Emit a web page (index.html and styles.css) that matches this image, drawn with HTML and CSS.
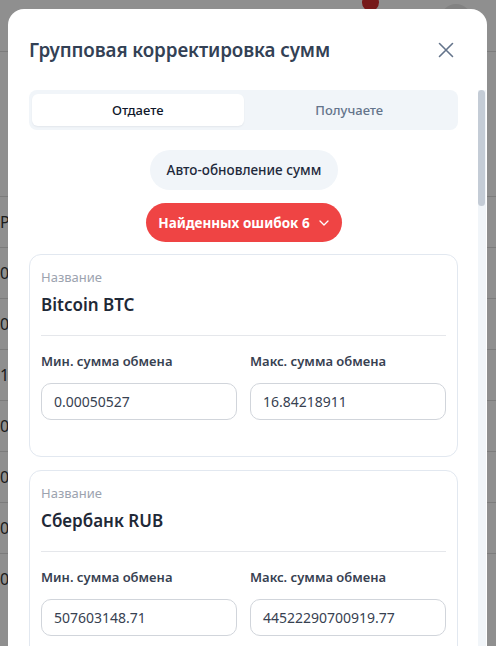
FILE: index.html
```html
<!DOCTYPE html>
<html lang="ru">
<head>
<meta charset="utf-8">
<title>Групповая корректировка сумм</title>
<link rel="stylesheet" href="styles.css">
</head>
<body>
<div class="page">
  <div class="topbar">
    <span class="badge"></span>
    <span class="avatar"></span>
  </div>
  <div class="rows">
    <div class="row">Р</div>
    <div class="row">0</div>
    <div class="row">0</div>
    <div class="row">1</div>
    <div class="row">0</div>
    <div class="row">0</div>
    <div class="row">0</div>
    <div class="row">0</div>
  </div>
  <div class="overlay"></div>
</div>

<div class="modal">
  <div class="modal-header">
    <h2 class="modal-title">Групповая корректировка сумм</h2>
    <button class="close" aria-label="Закрыть">
      <svg width="16" height="16" viewBox="0 0 16 16"><path d="M1.5 1.5 L14.5 14.5 M14.5 1.5 L1.5 14.5" stroke="#64748b" stroke-width="1.6" stroke-linecap="round" fill="none"/></svg>
    </button>
  </div>
  <div class="modal-body">
    <div class="tabs">
      <div class="tab active">Отдаете</div>
      <div class="tab">Получаете</div>
    </div>
    <div class="actions">
      <button class="btn-soft">Авто-обновление сумм</button>
      <button class="btn-danger">Найденных ошибок 6
        <svg width="10" height="6" viewBox="0 0 10 6"><path d="M1 1 L5 5 L9 1" stroke="#fff" stroke-width="1.3" fill="none" stroke-linecap="round" stroke-linejoin="round"/></svg>
      </button>
    </div>

    <div class="card">
      <div class="field-caption">Название</div>
      <div class="field-name">Bitcoin BTC</div>
      <div class="divider"></div>
      <div class="grid">
        <div class="col">
          <label class="lbl">Мин. сумма обмена</label>
          <div class="input">0.00050527</div>
        </div>
        <div class="col">
          <label class="lbl">Макс. сумма обмена</label>
          <div class="input">16.84218911</div>
        </div>
      </div>
    </div>

    <div class="card">
      <div class="field-caption">Название</div>
      <div class="field-name">Сбербанк RUB</div>
      <div class="divider"></div>
      <div class="grid">
        <div class="col">
          <label class="lbl">Мин. сумма обмена</label>
          <div class="input">507603148.71</div>
        </div>
        <div class="col">
          <label class="lbl">Макс. сумма обмена</label>
          <div class="input">44522290700919.77</div>
        </div>
      </div>
    </div>
  </div>
  <div class="scrollbar"><div class="thumb"></div></div>
</div>
</body>
</html>
```

FILE: styles.css
```css
* { box-sizing: border-box; }
html, body { margin: 0; padding: 0; }
body {
  width: 496px;
  height: 646px;
  overflow: hidden;
  font-family: "Noto Sans", "Open Sans", sans-serif;
  background: #fff;
  position: relative;
}
.page {
  position: absolute;
  inset: 0;
  background: #fff;
}
.topbar {
  height: 52px;
  border-bottom: 1px solid #ddd;
  position: relative;
}
.badge {
  position: absolute;
  left: 362px;
  top: -6px;
  width: 17px;
  height: 17px;
  border-radius: 50%;
  background: #d32f2f;
}
.avatar {
  position: absolute;
  left: 440px;
  top: 4px;
  width: 32px;
  height: 32px;
  border-radius: 50%;
  background: #e8e8e8;
}
.rows { padding-top: 144px; }
.row {
  height: 51px;
  border-top: 1px solid #ddd;
  font-size: 16px;
  color: #333;
  line-height: 50px;
}
.overlay {
  position: absolute;
  inset: 0;
  background: rgba(0, 0, 0, 0.44);
}

.modal {
  position: absolute;
  left: 8px;
  top: 9px;
  width: 479px;
  height: 700px;
  background: #fff;
  border-radius: 16px;
  overflow: hidden;
}
.modal-header {
  display: flex;
  align-items: center;
  justify-content: space-between;
  padding: 0 33px 0 21px;
  height: 81px;
}
.modal-title {
  margin: 0;
  font-size: 18.8px;
  font-weight: 600;
  color: #334155;
  letter-spacing: -0.1px;
  line-height: 26px;
}
.close {
  border: 0;
  background: none;
  padding: 0;
  width: 16px;
  height: 16px;
  display: flex;
}
.modal-body {
  padding: 0 29px 0 21px;
}
.tabs {
  display: flex;
  background: #f1f5f9;
  border-radius: 8px;
  padding: 4px 3px;
  height: 40px;
}
.tab {
  flex: 1;
  display: flex;
  align-items: center;
  justify-content: center;
  font-size: 13px;
  font-weight: 500;
  color: #64748b;
  border-radius: 6px;
}
.tab.active {
  background: #fff;
  color: #0f172a;
  box-shadow: 0 1px 2px rgba(15, 23, 42, 0.06);
}
.actions {
  display: flex;
  flex-direction: column;
  align-items: center;
  gap: 13px;
  padding: 20px 0 12px;
}
.btn-soft, .btn-danger {
  border: 0;
  font-family: inherit;
  height: 40px;
  border-radius: 20px;
  font-size: 13.5px;
  display: flex;
  align-items: center;
  justify-content: center;
}
.btn-soft {
  width: 188px;
  margin-left: 1px;
  background: #f1f5f9;
  color: #1e293b;
  font-weight: 500;
}
.btn-danger {
  width: 196px;
  height: 39px;
  background: #ef4444;
  color: #fff;
  font-weight: 700;
  gap: 9px;
}
.card {
  border: 1px solid #e2e8f0;
  border-radius: 12px;
  padding: 13px 11px 36px;
  margin-bottom: 13px;
}
.field-caption {
  font-size: 13px;
  line-height: 18px;
  color: #9ca3af;
}
.field-name {
  margin-top: 7px;
  font-size: 17px;
  font-weight: 600;
  line-height: 24px;
  color: #1f2937;
}
.divider {
  height: 1px;
  background: #e5e7eb;
  margin: 18px 0 16px;
}
.grid {
  display: grid;
  grid-template-columns: 1fr 1fr;
  column-gap: 13px;
}
.col { display: flex; flex-direction: column; }
.lbl {
  font-size: 13px;
  font-weight: 600;
  line-height: 18px;
  color: #374151;
}
.input {
  margin-top: 13px;
  height: 37px;
  border: 1px solid #d1d5db;
  border-radius: 10px;
  padding: 0 12px;
  display: flex;
  align-items: center;
  font-size: 14px;
  color: #374151;
}
.scrollbar {
  position: absolute;
  left: 470px;
  top: 81px;
  width: 8px;
  bottom: 0;
  background: #f1f5f9;
}
.thumb {
  height: 116px;
  width: 7px;
  border-radius: 4px;
  background: #c4ccd6;
}
```
